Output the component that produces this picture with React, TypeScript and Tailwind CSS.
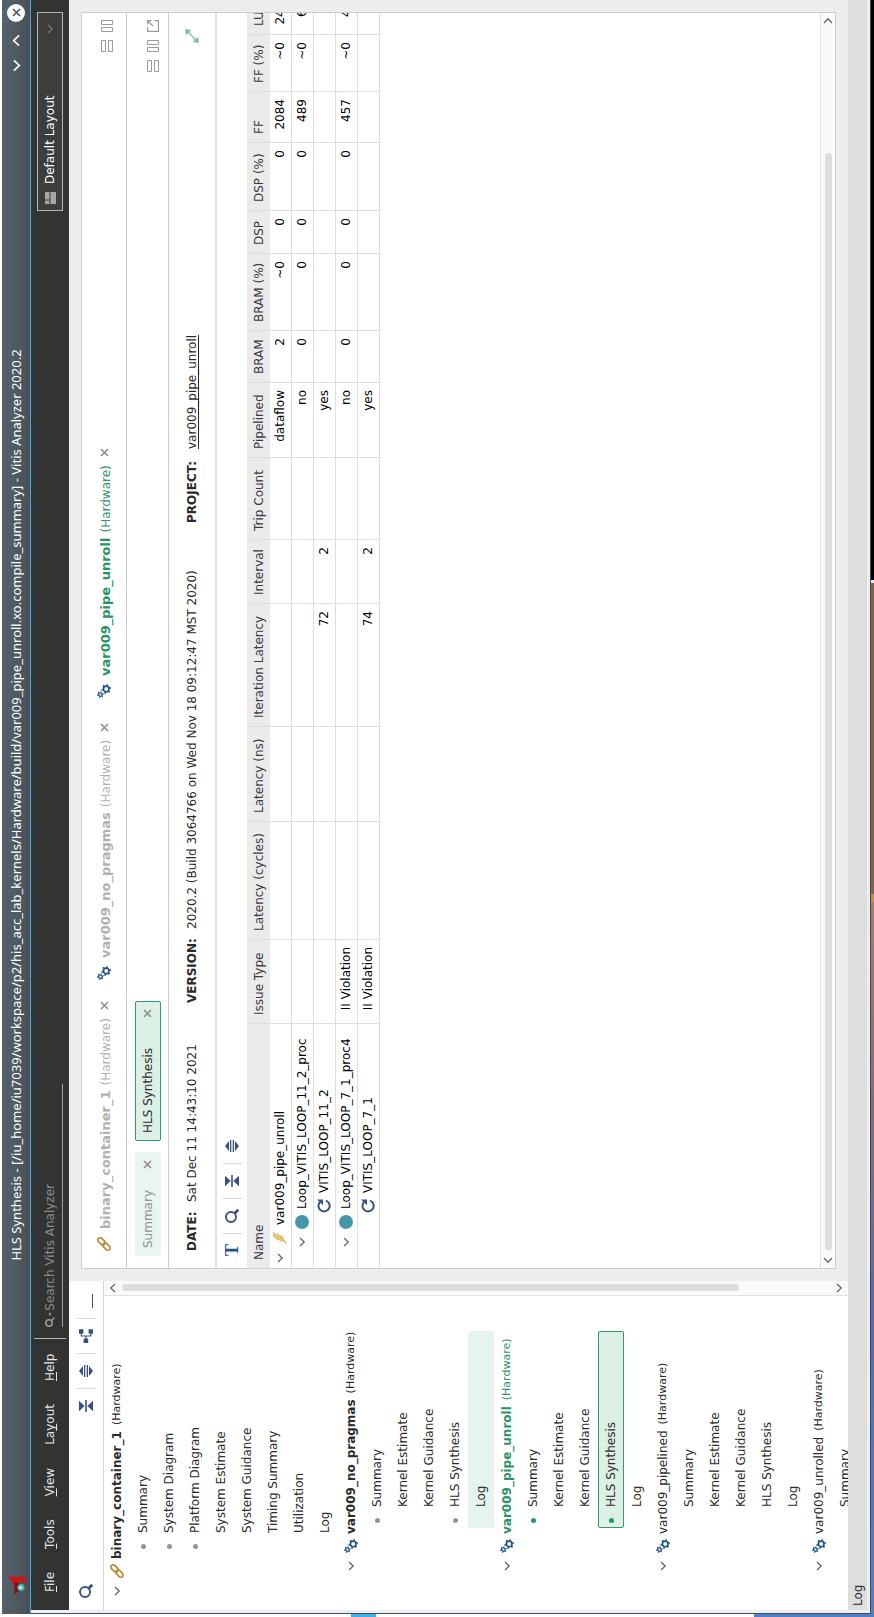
import type { ReactNode } from "react";

type IconProps = { className?: string };

/* ---------- icons ---------- */

const Chevron = ({ className = "", size = "h-[10px] w-[10px]" }: IconProps & { size?: string }) => (
  <svg viewBox="0 0 10 10" className={"shrink-0 " + size + " " + className} fill="none" stroke="currentColor" strokeWidth="1.3">
    <path d="M1 3l4 4.2L9 3" />
  </svg>
);

const Close = ({ className = "" }: IconProps) => (
  <svg viewBox="0 0 9 9" className={"h-[9px] w-[9px] shrink-0 " + className} fill="none" stroke="currentColor" strokeWidth="1.5">
    <path d="M1 1l7 7M8 1L1 8" />
  </svg>
);

const SearchIcon = () => (
  <svg viewBox="0 0 14 14" className="h-[14px] w-[14px] shrink-0" fill="none" stroke="currentColor">
    <circle cx="6" cy="6" r="5" strokeWidth="1.9" />
    <path d="M9.8 9.8l3.4 3.4" strokeWidth="2.8" />
  </svg>
);

const SearchMenuIcon = () => (
  <svg viewBox="0 0 16 10" className="h-[10px] w-[16px] shrink-0" fill="none" stroke="currentColor" strokeWidth="1.5">
    <circle cx="4" cy="4" r="3.200" />
    <path d="M6.300 6.300l3 3" />
    <path d="M11 4h4l-2 2.400z" fill="currentColor" stroke="none" />
  </svg>
);

const Collapse = () => (
  <svg viewBox="0 0 12 14" className="h-[14px] w-[12px]" fill="currentColor">
    <path d="M.8 0h10.4L6 5.6zM.8 14h10.4L6 8.4zM0 6.2h12v1.6H0z" />
  </svg>
);

const Expand = () => (
  <svg viewBox="0 0 12 14" className="h-[14px] w-[12px]" fill="currentColor">
    <path d="M6 0l5 4H1zM6 14l5-4H1zM0 5h12v1.300H0zM0 7.700h12V9H0z" />
  </svg>
);

const Hierarchy = () => (
  <svg viewBox="0 0 14 14" className="h-[14px] w-[14px]" fill="currentColor">
    <path d="M0 4.6h4.6v4.6H0zM9.2 0h4.6v4.4H9.2zM9.2 9.6h4.6V14H9.2z" />
    <path d="M4 7h3M9.6 2.2H7v9.6h2.6" fill="none" stroke="currentColor" strokeWidth="1.1" />
  </svg>
);

const LinkIcon = () => (
  <svg viewBox="0 0 14 14" className="h-[14px] w-[14px] shrink-0 text-[#c08a3a]" fill="none" stroke="currentColor" strokeWidth="1.7">
    <rect x="5.4" y="2.2" width="8.4" height="4.6" rx="2.3" transform="rotate(-45 9.6 4.5)" />
    <rect x=".2" y="7.2" width="8.4" height="4.6" rx="2.3" transform="rotate(-45 4.4 9.5)" />
  </svg>
);

const GearsIcon = () => (
  <svg viewBox="0 0 14 14" className="h-[14px] w-[14px] shrink-0 text-[#1f5488]" fill="none" stroke="currentColor">
    <circle cx="9" cy="9.2" r="2.8" strokeWidth="1.7" />
    <circle cx="9" cy="9.2" r="4.1" strokeWidth="1.4" strokeDasharray="1.7 2.59" />
    <circle cx="3.4" cy="3.4" r="1.8" strokeWidth="1.3" />
    <circle cx="3.4" cy="3.4" r="2.8" strokeWidth="1.1" strokeDasharray="1.2 1.73" />
  </svg>
);

const SplitColumns = () => (
  <svg viewBox="0 0 12 12" className="h-[12px] w-[12px]" fill="none" stroke="currentColor">
    <path d="M.5.5h4v11h-4zM7.5.5h4v11h-4z" />
  </svg>
);

const SplitRows = () => (
  <svg viewBox="0 0 12 12" className="h-[12px] w-[12px]" fill="none" stroke="currentColor">
    <path d="M.5.5h11v4H.5zM.5 7.5h11v4H.5z" />
  </svg>
);

const PopOut = () => (
  <svg viewBox="0 0 12 12" className="h-[12px] w-[12px]" fill="none" stroke="currentColor">
    <path d="M5 .6H.6v10.800h10.800V7.500M6 6l5-5M7.500.6h3.900v3.900" strokeWidth="1.2" />
  </svg>
);

const ResizeIcon = () => (
  <svg viewBox="0 0 14 14" className="h-[14px] w-[14px] text-[#7cc0a4]" fill="currentColor">
    <path d="M14 0l-1 6.200-5.200-5.200zM0 14l1-6.200 5.200 5.200z" />
    <path d="M3 11l8-8" stroke="currentColor" strokeWidth="1.3" />
  </svg>
);

const LoopIcon = () => (
  <svg viewBox="0 0 14 14" className="h-[14px] w-[14px] shrink-0 text-[#3a5280]" fill="none" stroke="currentColor">
    <path d="M11.200 3.200A5.600 5.600 0 1 0 12.400 9" strokeWidth="2" />
    <path d="M13.600 0v6H7.800z" fill="currentColor" stroke="none" />
  </svg>
);

const BoltIcon = () => (
  <svg viewBox="0 0 14 14" className="h-[14px] w-[14px] shrink-0" fill="#e9c572" stroke="#d3a44a" strokeWidth=".6">
    <path d="M8.500.5h4L9.200 4.400h2.400L7.800 8h2L1 13.600l4-4.800H3.200L6.400 5.200H4.800z" />
  </svg>
);

const DiscIcon = () => <span className="h-[14px] w-[14px] shrink-0 rounded-full bg-[#4596a8]" />;

const AppLogo = () => (
  <svg viewBox="0 0 19 19" className="h-[19px] w-[19px]">
    <path d="M18.500 1v17.500H11.500l1.700-7L9 7.500z" fill="#c4161c" />
    <path d="M1 7l12 1-1.500 5H4z" fill="#7d1216" />
    <circle cx="7.500" cy="14" r="3.600" fill="#4fb3a5" />
    <circle cx="7.500" cy="13.500" r="1.600" fill="#d8f1ec" />
  </svg>
);

const LayoutIcon = () => (
  <svg viewBox="0 0 12 11" className="h-[11px] w-[12px]" fill="#a6a6a6">
    <path d="M0 0h3.500v4.500H0zM4.500 0H12v4.500H4.500zM0 5.500h12V11H0z" />
  </svg>
);

/* ---------- shared controls ---------- */

const IconButton = ({ label, children, className = "" }: { label: string; children: ReactNode; className?: string }) => (
  <button type="button" aria-label={label} className={"flex shrink-0 items-center justify-center " + className}>
    {children}
  </button>
);

const Divider = () => <span className="h-[19px] w-px shrink-0 bg-[#d3dbe3]" />;

/* ---------- title and menu bars ---------- */

const TitleBar = () => (
  <header className="flex h-[28px] shrink-0 items-center bg-linear-to-b from-[#56636c] to-[#475057] text-white">
    <span className="flex w-[38px] shrink-0 items-center justify-end">
      <AppLogo />
    </span>
    <h1 className="min-w-0 flex-1 truncate pl-[38px] text-center font-['Noto_Sans'] text-[13px] leading-[20px] font-normal">
      HLS Synthesis - [/iu_home/iu7039/workspace/p2/his_acc_lab_kernels/Hardware/build/var009_pipe_unroll.xo.compile_summary] - Vitis Analyzer 2020.2
    </h1>
    <div className="flex shrink-0 items-center gap-[12px] pr-[4px]">
      <IconButton label="Minimize">
        <Chevron size="h-[13px] w-[13px]" />
      </IconButton>
      <IconButton label="Maximize">
        <Chevron size="h-[13px] w-[13px]" className="rotate-180" />
      </IconButton>
      <IconButton label="Close window" className="h-[18px] w-[18px] rounded-full bg-white text-[#475057]">
        <Close />
      </IconButton>
    </div>
  </header>
);

const menus = [
  { key: "F", rest: "ile" },
  { key: "T", rest: "ools" },
  { key: "V", rest: "iew" },
  { pre: "La", key: "y", rest: "out" },
  { key: "H", rest: "elp" },
];

const MenuBar = () => (
  <div className="flex h-[38px] shrink-0 items-center bg-[#333333] pr-[12px] pl-[18px] text-[#e6e6e6]">
    <nav className="flex items-center gap-[23px]">
      {menus.map((m) => (
        <button type="button" key={m.key}>
          {m.pre}
          <span className="underline underline-offset-2">{m.key}</span>
          {m.rest}
        </button>
      ))}
    </nav>
    <span className="ml-[15px] h-[32px] w-px bg-[#b5b5b5]" />
    <label className="ml-[11px] flex h-[26px] w-[243px] items-center border-b border-[#a0a0a0] text-[#9a9a9a]">
      <SearchMenuIcon />
      <input
        aria-label="Search Vitis Analyzer"
        placeholder="Search Vitis Analyzer"
        className="min-w-0 flex-1 bg-transparent outline-none placeholder:text-[#8c8c8c]"
      />
    </label>
    <span className="flex-1" />
    <label className="grid h-[26px] w-[199px] grid-cols-[26px_1fr_21px] items-center border border-[#b5b5b5] bg-[#3d3d3d] text-white">
      <span className="col-start-1 row-start-1 pl-[6px]">
        <LayoutIcon />
      </span>
      <select aria-label="Layout" className="col-span-3 col-start-1 row-start-1 h-full appearance-none bg-transparent pl-[26px] outline-none">
        <option>Default Layout</option>
      </select>
      <Chevron className="col-start-3 row-start-1 text-[#747474]" />
    </label>
  </div>
);

/* ---------- report navigator ---------- */

type TreeRow = {
  kind: "root" | "run" | "item" | "subitem";
  label: string;
  bold?: boolean;
  green?: boolean;
  dot?: "gray" | "green";
  mark?: "hover" | "selected";
};

const treeRows: TreeRow[] = [
  { kind: "root", label: "binary_container_1", bold: true },
  { kind: "item", label: "Summary", dot: "gray" },
  { kind: "item", label: "System Diagram", dot: "gray" },
  { kind: "item", label: "Platform Diagram", dot: "gray" },
  { kind: "item", label: "System Estimate" },
  { kind: "item", label: "System Guidance" },
  { kind: "item", label: "Timing Summary" },
  { kind: "item", label: "Utilization" },
  { kind: "item", label: "Log" },
  { kind: "run", label: "var009_no_pragmas", bold: true },
  { kind: "subitem", label: "Summary", dot: "gray" },
  { kind: "subitem", label: "Kernel Estimate" },
  { kind: "subitem", label: "Kernel Guidance" },
  { kind: "subitem", label: "HLS Synthesis", dot: "gray" },
  { kind: "subitem", label: "Log", mark: "hover" },
  { kind: "run", label: "var009_pipe_unroll", bold: true, green: true },
  { kind: "subitem", label: "Summary", dot: "green" },
  { kind: "subitem", label: "Kernel Estimate" },
  { kind: "subitem", label: "Kernel Guidance" },
  { kind: "subitem", label: "HLS Synthesis", dot: "green", mark: "selected" },
  { kind: "subitem", label: "Log" },
  { kind: "run", label: "var009_pipelined" },
  { kind: "subitem", label: "Summary" },
  { kind: "subitem", label: "Kernel Estimate" },
  { kind: "subitem", label: "Kernel Guidance" },
  { kind: "subitem", label: "HLS Synthesis" },
  { kind: "subitem", label: "Log" },
  { kind: "run", label: "var009_unrolled" },
  { kind: "subitem", label: "Summary" },
];

const TreeLine = ({ row }: { row: TreeRow }) => {
  if (row.kind === "root" || row.kind === "run") {
    return (
      <li className={"flex h-[26px] items-center " + (row.kind === "root" ? "pl-[14px]" : "pl-[39px]") + (row.green ? " text-[#2a9468]" : "")}>
        <IconButton label={"Collapse " + row.label} className="mr-[8px] text-[#666666]">
          <Chevron />
        </IconButton>
        {row.kind === "root" ? <LinkIcon /> : <GearsIcon />}
        <span className={"ml-[5px] " + (row.bold ? "font-bold" : "")}>{row.label}</span>
        <span className="ml-[6px] text-[11px]">(Hardware)</span>
      </li>
    );
  }
  const mark =
    row.mark === "selected"
      ? "rounded-[2px] border-[#2f9a70] bg-[#ddf0e6]"
      : row.mark === "hover"
        ? "rounded-[2px] border-[#e6f4ee] bg-[#e6f4ee]"
        : "border-transparent";
  return (
    <li className={row.kind === "item" ? "pl-[56px]" : "pl-[82px]"}>
      <button type="button" className={"flex h-[26px] w-[197px] items-center border pl-[4px] text-left " + mark}>
        <span
          className={
            "mr-[11px] h-[5px] w-[5px] rounded-full " +
            (row.dot === "green" ? "bg-[#1f9a68]" : row.dot === "gray" ? "bg-[#949494]" : "bg-transparent")
          }
        />
        {row.label}
      </button>
    </li>
  );
};

const Navigator = () => (
  <aside className="flex w-[329px] shrink-0 flex-col bg-white">
    <div className="flex h-[35px] shrink-0 items-center gap-[10px] border-b border-[#d4d4d4] pr-[13px] pl-[12px] text-[#3a4f7d]">
      <IconButton label="Search reports" className="mr-auto">
        <SearchIcon />
      </IconButton>
      <IconButton label="Collapse all" className="w-[14px]">
        <Collapse />
      </IconButton>
      <Divider />
      <IconButton label="Expand all" className="w-[14px]">
        <Expand />
      </IconButton>
      <Divider />
      <IconButton label="Show hierarchy" className="w-[14px]">
        <Hierarchy />
      </IconButton>
      <Divider />
      <IconButton label="Hide panel" className="h-[14px] w-[14px] items-end">
        <span className="h-px w-full bg-[#3a4f7d]" />
      </IconButton>
    </div>
    <div className="flex min-h-0 flex-1">
      <ul className="min-w-0 flex-1 overflow-hidden text-[#2b2b2b]">
        {treeRows.map((row, i) => (
          <TreeLine key={i} row={row} />
        ))}
      </ul>
      <div className="flex w-[15px] shrink-0 flex-col items-center border-l border-[#e2e2e2] bg-[#fafafa] py-[4px] text-[#666666]">
        <Chevron className="rotate-180" />
        <div className="mt-[4px] mb-[3px] flex w-full flex-1 flex-col items-center">
          <span className="h-[87%] w-[7px] rounded-[3px] bg-[#dcdcdc]" />
        </div>
        <Chevron />
      </div>
    </div>
  </aside>
);

/* ---------- report area ---------- */

const runTabs = [
  { label: "binary_container_1", icon: <LinkIcon />, tone: "text-[#b0b0b0]", width: "w-[271px]" },
  { label: "var009_no_pragmas", icon: <GearsIcon />, tone: "text-[#b0b0b0]", width: "w-[282px]" },
  { label: "var009_pipe_unroll", icon: <GearsIcon />, tone: "text-[#2a9468]", width: "w-[260px]" },
];

const RunTabs = () => (
  <div className="flex h-[45px] shrink-0 items-center border-b border-[#cccccc] pr-[7px] pl-[17px]">
    {runTabs.map((t) => (
      <div key={t.label} className={"flex shrink-0 items-center " + t.tone + " " + t.width}>
        {t.icon}
        <button type="button" className="ml-[8px] flex items-center gap-[5px] pt-[4px]">
          <span className="text-[13px] font-bold">{t.label}</span>
          <span>(Hardware)</span>
        </button>
        <IconButton label={"Close " + t.label} className="ml-[8px] text-[#8c8c8c]">
          <Close />
        </IconButton>
      </div>
    ))}
    <div className="ml-auto flex gap-[8px] pt-[5px] text-[#9a9a9a]">
      <IconButton label="Split horizontally">
        <SplitRows />
      </IconButton>
      <IconButton label="Split vertically">
        <SplitColumns />
      </IconButton>
    </div>
  </div>
);

const ReportTabs = () => (
  <div className="flex h-[42px] shrink-0 items-center border-b border-[#cccccc] pr-[7px] pl-[12px]">
    <div className="flex h-[26px] w-[104px] items-center justify-between rounded-[2px] bg-[#e9f5f0] px-[8px]">
      <button type="button" className="text-[#8f9592]">
        Summary
      </button>
      <IconButton label="Close Summary" className="text-[#8c8c8c]">
        <Close />
      </IconButton>
    </div>
    <div className="ml-[11px] flex h-[26px] w-[140px] items-center justify-between rounded-[2px] border border-[#2f9a70] bg-[#ddf0e6] px-[7px]">
      <button type="button" className="text-[#2b2b2b]">
        HLS Synthesis
      </button>
      <IconButton label="Close HLS Synthesis" className="text-[#8c8c8c]">
        <Close />
      </IconButton>
    </div>
    <div className="ml-auto flex gap-[8px] pt-[10px] text-[#9a9a9a]">
      <IconButton label="Split horizontally">
        <SplitRows />
      </IconButton>
      <IconButton label="Split vertically">
        <SplitColumns />
      </IconButton>
      <IconButton label="Open in new window">
        <PopOut />
      </IconButton>
    </div>
  </div>
);

const InfoBar = () => (
  <div className="flex h-[48px] shrink-0 items-center border-b-2 border-[#e2e2e2] pr-[16px] pl-[17px] text-[#2b2b2b]">
    <dl className="flex flex-1 items-center">
      <dt className="w-[49px] font-bold">DATE:</dt>
      <dd className="w-[199px]">Sat Dec 11 14:43:10 2021</dd>
      <dt className="w-[74px] font-bold">VERSION:</dt>
      <dd className="w-[406px]">2020.2 (Build 3064766 on Wed Nov 18 09:12:47 MST 2020)</dd>
      <dt className="w-[74px] font-bold">PROJECT:</dt>
      <dd>
        <a href="#project" className="underline underline-offset-2">
          var009_pipe_unroll
        </a>
      </dd>
    </dl>
    <IconButton label="Resize report">
      <ResizeIcon />
    </IconButton>
  </div>
);

const columns = [
  { name: "Name", width: "w-[245px]" },
  { name: "Issue Type", width: "w-[84px]" },
  { name: "Latency (cycles)", width: "w-[118px]" },
  { name: "Latency (ns)", width: "w-[95px]" },
  { name: "Iteration Latency", width: "w-[123px]" },
  { name: "Interval", width: "w-[64px]" },
  { name: "Trip Count", width: "w-[82px]" },
  { name: "Pipelined", width: "w-[75px]" },
  { name: "BRAM", width: "w-[52px]" },
  { name: "BRAM (%)", width: "w-[77px]" },
  { name: "DSP", width: "w-[43px]" },
  { name: "DSP (%)", width: "w-[68px]" },
  { name: "FF", width: "w-[51px]" },
  { name: "FF (%)", width: "w-[57px]" },
  { name: "LUT", width: "w-[48px]" },
];

type LoopRow = { name: string; icon: ReactNode; indent: string; open: boolean; cells: string[] };

const loopRows: LoopRow[] = [
  { name: "var009_pipe_unroll", icon: <BoltIcon />, indent: "pl-[5px]", open: true, cells: ["", "", "", "", "", "", "dataflow", "2", "~0", "0", "0", "2084", "~0", "2440"] },
  { name: "Loop_VITIS_LOOP_11_2_proc", icon: <DiscIcon />, indent: "pl-[21px]", open: true, cells: ["", "", "", "", "", "", "no", "0", "0", "0", "0", "489", "~0", "612"] },
  { name: "VITIS_LOOP_11_2", icon: <LoopIcon />, indent: "pl-[55px]", open: false, cells: ["", "", "", "72", "2", "", "yes", "", "", "", "", "", "", ""] },
  { name: "Loop_VITIS_LOOP_7_1_proc4", icon: <DiscIcon />, indent: "pl-[21px]", open: true, cells: ["II Violation", "", "", "", "", "", "no", "0", "0", "0", "0", "457", "~0", "481"] },
  { name: "VITIS_LOOP_7_1", icon: <LoopIcon />, indent: "pl-[55px]", open: false, cells: ["II Violation", "", "", "74", "2", "", "yes", "", "", "", "", "", "", ""] },
];

const LoopTable = () => (
  <table className="w-[1282px] table-fixed border-separate border-spacing-0">
    <thead>
      <tr className="h-[23px] bg-[#ebebeb] text-left text-[#3a3a3a]">
        {columns.map((c) => (
          <th key={c.name} scope="col" className={"border-r border-[#dedede] p-0 pl-[8px] font-normal whitespace-nowrap " + c.width}>
            {c.name}
          </th>
        ))}
      </tr>
    </thead>
    <tbody className="text-black">
      {loopRows.map((r) => (
        <tr key={r.name} className="h-[22px]">
          <td className={"border-r border-b border-[#dedede] p-0 pb-[2px] " + r.indent}>
            <div className="flex items-center">
              {r.open && (
                <IconButton label={"Collapse " + r.name} className="mr-[8px] text-[#666666]">
                  <Chevron />
                </IconButton>
              )}
              {r.icon}
              <span className="ml-[6px]">{r.name}</span>
            </div>
          </td>
          {r.cells.map((v, i) => (
            <td key={i} className="border-r border-b border-[#dedede] p-0 pr-[7px] pb-[2px] text-right whitespace-nowrap">
              {v}
            </td>
          ))}
        </tr>
      ))}
    </tbody>
  </table>
);

const ReportPanel = () => (
  <main className="m-[12px] flex min-w-0 flex-1 flex-col border border-[#cccccc] bg-white">
    <RunTabs />
    <ReportTabs />
    <InfoBar />
    <div className="flex h-[30px] shrink-0 items-center gap-[10px] pl-[12px] text-[#3a4f7d]">
      <IconButton label="Text view" className="w-[12px] font-['Liberation_Serif'] text-[18px] font-bold text-[#1f5488]">
        T
      </IconButton>
      <Divider />
      <IconButton label="Find">
        <SearchIcon />
      </IconButton>
      <Divider />
      <IconButton label="Collapse all rows" className="w-[14px]">
        <Collapse />
      </IconButton>
      <Divider />
      <IconButton label="Expand all rows" className="w-[14px]">
        <Expand />
      </IconButton>
    </div>
    <div className="min-h-0 flex-1 overflow-hidden">
      <LoopTable />
    </div>
    <div className="flex h-[15px] shrink-0 items-center border-t border-[#e2e2e2] bg-[#fafafa] px-[3px] text-[#666666]">
      <Chevron className="rotate-90" />
      <div className="mx-[5px] flex flex-1">
        <span className="h-[7px] w-[90%] rounded-[3px] bg-[#dcdcdc]" />
      </div>
      <Chevron className="-rotate-90" />
    </div>
  </main>
);

/* ---------- window, turned a quarter left ---------- */

export default function App() {
  return (
    <div className="relative h-screen w-screen overflow-hidden">
      <div className="absolute top-full left-0 flex h-[100vw] w-[100vh] origin-top-left -rotate-90 flex-col bg-white pt-[2px] font-['DejaVu_Sans',sans-serif] text-[12px] leading-[16px]">
        <div className="flex min-h-0 flex-1">
          <div className="flex w-[3px] shrink-0 flex-col">
            <span className="h-[349px] bg-white" />
            <span className="h-[25px] bg-[#3daee9]" />
            <span className="h-[378px] bg-white" />
            <span className="flex-1 bg-[#4f80c8]" />
          </div>
          <div className="flex min-w-0 flex-1 flex-col border-b border-[#3f4b57]">
            <TitleBar />
            <div className="flex min-h-0 flex-1 flex-col border-t border-l border-t-[#3daee9] border-l-[#475057] bg-[#eceff1] pl-[3px]">
              <MenuBar />
              <div className="flex min-h-0 flex-1 bg-[#ededed]">
                <Navigator />
                <ReportPanel />
              </div>
              <footer className="mb-[3px] flex h-[19px] shrink-0 items-center bg-[#dedede] pl-[4px] text-[#2b2b2b]">Log</footer>
            </div>
          </div>
        </div>
        <div className="flex h-[3px] shrink-0">
          <span className="w-[300px] bg-linear-to-r from-[#4f80c8] to-[#5a68b0]" />
          <span className="w-[415px] bg-linear-to-r from-[#5a68b0] via-[#8a6878] to-[#b07868]" />
          <span className="w-[8px] bg-[#d08a30]" />
          <span className="w-[311px] bg-[#86603f]" />
          <span className="w-[3px] bg-[#e8e8e8]" />
          <span className="flex-1 bg-black" />
        </div>
      </div>
    </div>
  );
}
